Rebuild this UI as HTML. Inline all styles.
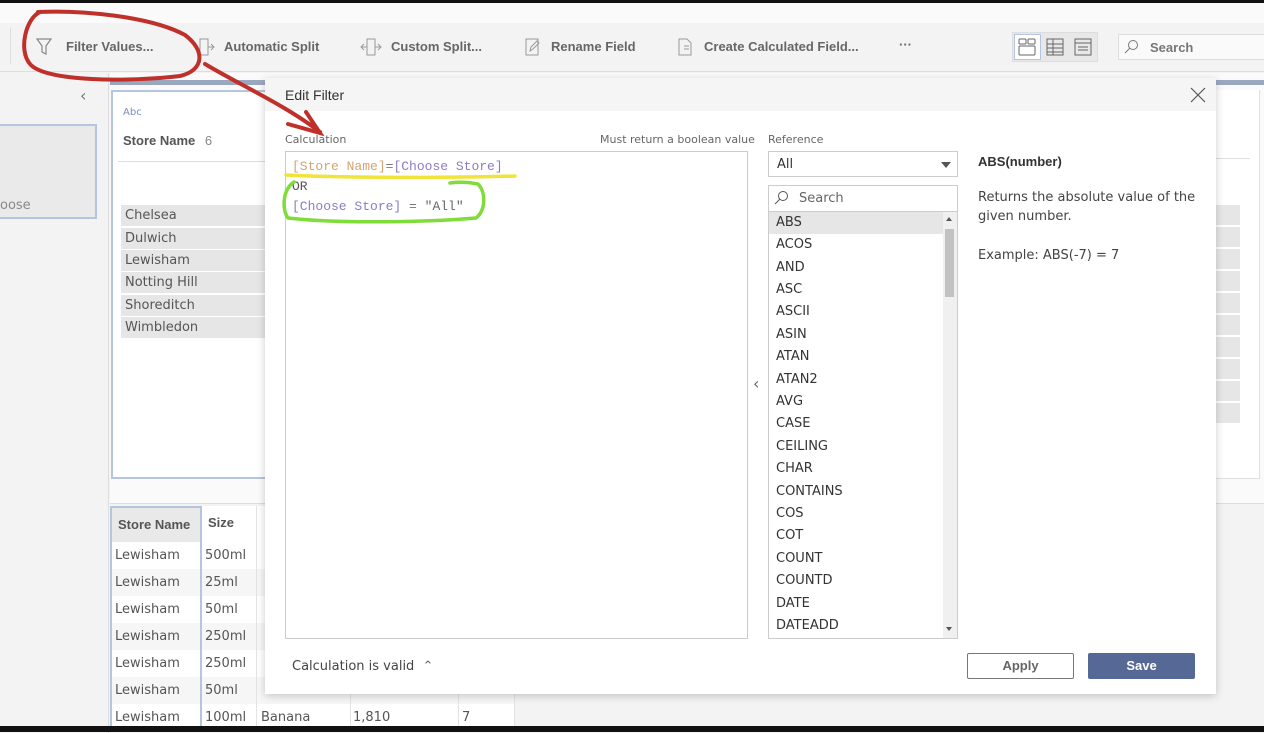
<!DOCTYPE html>
<html><head><meta charset="utf-8"><style>
*{box-sizing:border-box;margin:0;padding:0}
body{width:1264px;height:732px;position:relative;overflow:hidden;background:#f3f3f3;font-family:"DejaVu Sans","Liberation Sans",sans-serif;color:#333}
.a{position:absolute}
.t{font-size:13px;color:#555}
.tb{font-size:13px;color:#666;font-weight:bold;font-family:"Liberation Sans",sans-serif}
.mono{font-family:"Liberation Mono",monospace;font-size:13px}
.li{position:absolute;left:776px;font-size:13px;color:#333}
.row{position:absolute;left:121px;width:144px;height:21px;background:#e6e6e6;font-size:13px;color:#555;padding:3px 4px}
.rb{position:absolute;left:1215px;width:25px;height:20px;background:#e6e6e6}
.tr{position:absolute;left:110px;width:405px;height:27px;font-size:13px;color:#555}
.tr span{position:absolute;top:6px}
</style></head><body>
<div class="a" style="left:0;top:0;width:1264px;height:3px;background:#111"></div>
<div class="a" style="left:0;top:3px;width:1264px;height:20px;background:#fafafa"></div>
<div class="a" style="left:0;top:23px;width:1264px;height:49px;background:#f3f3f3;border-bottom:1px solid #ddd"></div>
<div class="a" style="left:10px;top:28px;width:1px;height:36px;background:#ddd"></div>
<svg class="a" style="left:36px;top:38px" width="16" height="18"><path d="M1 1h14l-5 7v8l-4-2V8z" fill="none" stroke="#888" stroke-width="1.2"/></svg>
<div class="a tb" style="left:66px;top:39px">Filter Values...</div>
<svg class="a" style="left:196px;top:37px" width="20" height="20"><rect x="4" y="2" width="8" height="16" fill="none" stroke="#999"/><path d="M12 10h6M15 7l3 3-3 3" fill="none" stroke="#999"/></svg>
<div class="a tb" style="left:224px;top:39px">Automatic Split</div>
<svg class="a" style="left:360px;top:37px" width="22" height="20"><rect x="7" y="2" width="8" height="16" fill="none" stroke="#999"/><path d="M1 10h6M4 7l-3 3 3 3M15 10h6M18 7l3 3-3 3" fill="none" stroke="#999"/></svg>
<div class="a tb" style="left:391px;top:39px">Custom Split...</div>
<svg class="a" style="left:524px;top:37px" width="18" height="20"><path d="M2 2h12v16H2z M6 14l1-4 6-6 2 2-6 6z" fill="none" stroke="#999"/></svg>
<div class="a tb" style="left:551px;top:39px">Rename Field</div>
<svg class="a" style="left:677px;top:37px" width="16" height="20"><path d="M2 2h8l4 4v12H2z M7 9h5M7 12h5" fill="none" stroke="#999"/></svg>
<div class="a tb" style="left:704px;top:39px">Create Calculated Field...</div>
<div class="a tb" style="left:899px;top:37px">···</div>
<div class="a" style="left:1012px;top:32px;width:86px;height:30px;background:#e8e8e8;border:1px solid #ddd"></div>
<div class="a" style="left:1014px;top:34px;width:27px;height:26px;background:#fff;border:1px solid #b5c5e0"></div>
<svg class="a" style="left:1017px;top:37px" width="80" height="20"><rect x="2" y="2" width="7" height="5" rx="1" fill="none" stroke="#666"/><rect x="11" y="2" width="7" height="5" rx="1" fill="none" stroke="#666"/><rect x="2" y="9" width="16" height="9" rx="1" fill="none" stroke="#666"/><rect x="30" y="2" width="16" height="16" fill="none" stroke="#666"/><path d="M30 7h16M30 11h16M30 15h16M36 2v16" stroke="#666"/><rect x="58" y="2" width="16" height="16" fill="none" stroke="#666"/><path d="M58 6h16M61 10h10M61 13h10" stroke="#666"/></svg>
<div class="a" style="left:1118px;top:34px;width:150px;height:26px;background:#fafafa;border:1px solid #ddd"></div>
<svg class="a" style="left:1124px;top:39px" width="16" height="16"><circle cx="9" cy="6" r="4.5" fill="none" stroke="#777"/><path d="M6 9l-5 5" stroke="#777"/></svg>
<div class="a tb" style="left:1150px;top:40px;color:#777">Search</div>
<div class="a" style="left:108px;top:73px;width:1px;height:660px;background:#ddd"></div>
<div class="a" style="left:80px;top:86px;font-size:16px;color:#777">‹</div>
<div class="a" style="left:-2px;top:124px;width:99px;height:95px;background:#eaeaea;border:2px solid #b5c5e0"></div>
<div class="a t" style="left:0;top:198px;color:#888">oose</div>
<div class="a" style="left:110px;top:73px;width:1154px;height:430px;background:#fafafa"></div>
<div class="a" style="left:110px;top:80px;width:1154px;height:5px;background:#9aa8bf"></div>
<div class="a" style="left:111px;top:90px;width:160px;height:389px;background:#fff;border:2px solid #b5c5e0;border-right:none"></div>
<div class="a" style="left:1215px;top:90px;width:45px;height:389px;background:#fff;border-right:1px solid #e0e0e0;border-bottom:1px solid #e0e0e0"></div>
<div class="a" style="left:1215px;top:158px;width:35px;height:1px;background:#e0e0e0"></div>
<div class="a" style="left:123px;top:107px;font-size:10px;color:#7a8fbf">Abc</div>
<div class="a" style="left:123px;top:133px;font-size:13px;font-weight:bold;color:#555;font-family:'Liberation Sans',sans-serif">Store Name <span style="font-weight:normal;color:#888;margin-left:6px">6</span></div>
<div class="a" style="left:118px;top:161px;width:150px;height:1px;background:#ddd"></div>
<div class="row" style="top:205px">Chelsea</div>
<div class="row" style="top:228px">Dulwich</div>
<div class="row" style="top:250px">Lewisham</div>
<div class="row" style="top:272px">Notting Hill</div>
<div class="row" style="top:295px">Shoreditch</div>
<div class="row" style="top:317px">Wimbledon</div>
<div class="rb" style="top:205px"></div><div class="rb" style="top:227px"></div><div class="rb" style="top:249px"></div><div class="rb" style="top:271px"></div><div class="rb" style="top:293px"></div><div class="rb" style="top:315px"></div><div class="rb" style="top:337px"></div><div class="rb" style="top:359px"></div><div class="rb" style="top:381px"></div><div class="rb" style="top:403px"></div>
<div class="a" style="left:110px;top:503px;width:1154px;height:1px;background:#ddd"></div>
<div class="a" style="left:110px;top:506px;width:405px;height:222px;background:#fff"></div>
<div class="tr" style="top:542px"><span style="left:5px">Lewisham</span><span style="left:95px">500ml</span></div>
<div class="tr" style="top:569px;background:#f6f6f6"><span style="left:5px">Lewisham</span><span style="left:95px">25ml</span></div>
<div class="tr" style="top:596px"><span style="left:5px">Lewisham</span><span style="left:95px">50ml</span></div>
<div class="tr" style="top:623px;background:#f6f6f6"><span style="left:5px">Lewisham</span><span style="left:95px">250ml</span></div>
<div class="tr" style="top:650px"><span style="left:5px">Lewisham</span><span style="left:95px">250ml</span></div>
<div class="tr" style="top:677px;background:#f6f6f6"><span style="left:5px">Lewisham</span><span style="left:95px">50ml</span></div>
<div class="tr" style="top:704px"><span style="left:5px">Lewisham</span><span style="left:95px">100ml</span><span style="left:151px">Banana</span><span style="left:243px">1,810</span><span style="left:352px">7</span></div>
<div class="a" style="left:110px;top:506px;width:92px;height:36px;background:#e9e9e9"></div>
<div class="a" style="left:118px;top:517px;font-size:13px;font-weight:bold;color:#555;font-family:'Liberation Sans',sans-serif">Store Name</div>
<div class="a" style="left:208px;top:515px;font-size:13px;font-weight:bold;color:#555;font-family:'Liberation Sans',sans-serif">Size</div>
<div class="a" style="left:110px;top:506px;width:92px;height:226px;border:2px solid #b5c5e0;border-bottom:none"></div>
<div class="a" style="left:256px;top:506px;width:1px;height:222px;background:#e3e3e3"></div>
<div class="a" style="left:350px;top:506px;width:1px;height:222px;background:#e3e3e3"></div>
<div class="a" style="left:458px;top:506px;width:1px;height:222px;background:#e3e3e3"></div>
<div class="a" style="left:514px;top:506px;width:1px;height:222px;background:#e3e3e3"></div>
<div class="a" style="left:0;top:726px;width:1264px;height:6px;background:#111"></div>
<div class="a" style="left:265px;top:78px;width:951px;height:616px;background:#fff;box-shadow:0 2px 8px rgba(0,0,0,.2)"></div>
<div class="a" style="left:265px;top:78px;width:951px;height:33px;background:#f5f5f5"></div>
<div class="a" style="left:285px;top:87px;font-size:14px;color:#333;font-family:'Liberation Sans',sans-serif">Edit Filter</div>
<svg class="a" style="left:1190px;top:87px" width="16" height="16"><path d="M1 1l14 14M15 1L1 15" stroke="#555" stroke-width="1.2"/></svg>
<div class="a" style="left:285px;top:133px;font-size:11px;color:#666">Calculation</div>
<div class="a" style="left:600px;top:133px;font-size:11px;color:#666">Must return a boolean value</div>
<div class="a" style="left:285px;top:151px;width:463px;height:488px;border:1px solid #ccc"></div>
<div class="a mono" style="left:292px;top:159px;color:#d4a373">[Store Name]<span style="color:#777">=</span><span style="color:#8e7cc3">[Choose Store]</span></div>
<div class="a mono" style="left:292px;top:179px;color:#555">OR</div>
<div class="a mono" style="left:292px;top:199px;color:#8e7cc3">[Choose Store] <span style="color:#777">=</span> <span style="color:#666">"All"</span></div>
<div class="a" style="left:768px;top:133px;font-size:11px;color:#666">Reference</div>
<div class="a" style="left:768px;top:151px;width:190px;height:26px;border:1px solid #ccc;font-size:13px;padding:5px 8px">All</div>
<div class="a" style="left:941px;top:162px;width:0;height:0;border-left:5px solid transparent;border-right:5px solid transparent;border-top:6px solid #555"></div>
<div class="a" style="left:768px;top:185px;width:190px;height:454px;border:1px solid #ccc"></div>
<div class="a" style="left:768px;top:211px;width:190px;height:1px;background:#ccc"></div>
<svg class="a" style="left:774px;top:190px" width="16" height="16"><circle cx="9" cy="6" r="4.5" fill="none" stroke="#555"/><path d="M6 9l-5 5" stroke="#555"/></svg>
<div class="a" style="left:799px;top:191px;font-size:13px;color:#666">Search</div>
<div class="a" style="left:769px;top:212px;width:174px;height:22px;background:#e6e6e6"></div>
<div class="a" style="left:943px;top:212px;width:14px;height:426px;background:#f0f0f0"></div>
<div class="a" style="left:945px;top:229px;width:9px;height:68px;background:#c2c2c2"></div>
<div class="a" style="left:946px;top:217px;border-left:3px solid transparent;border-right:3px solid transparent;border-bottom:4px solid #555"></div>
<div class="a" style="left:946px;top:627px;border-left:3px solid transparent;border-right:3px solid transparent;border-top:4px solid #555"></div>
<div class="li" style="top:215px">ABS</div><div class="li" style="top:237px">ACOS</div><div class="li" style="top:260px">AND</div><div class="li" style="top:282px">ASC</div><div class="li" style="top:304px">ASCII</div><div class="li" style="top:327px">ASIN</div><div class="li" style="top:349px">ATAN</div><div class="li" style="top:372px">ATAN2</div><div class="li" style="top:394px">AVG</div><div class="li" style="top:416px">CASE</div><div class="li" style="top:439px">CEILING</div><div class="li" style="top:461px">CHAR</div><div class="li" style="top:484px">CONTAINS</div><div class="li" style="top:506px">COS</div><div class="li" style="top:528px">COT</div><div class="li" style="top:551px">COUNT</div><div class="li" style="top:573px">COUNTD</div><div class="li" style="top:596px">DATE</div><div class="li" style="top:618px">DATEADD</div>
<div class="a" style="left:753px;top:374px;font-size:16px;color:#666">‹</div>
<div class="a" style="left:978px;top:154px;font-size:13px;font-weight:bold;color:#333;font-family:'Liberation Sans',sans-serif">ABS(number)</div>
<div class="a" style="left:978px;top:188px;font-size:13px;color:#444;line-height:19px;width:220px">Returns the absolute value of the given number.</div>
<div class="a" style="left:978px;top:248px;font-size:13px;color:#444">Example: ABS(-7) = 7</div>
<div class="a" style="left:292px;top:659px;font-size:13px;color:#444">Calculation is valid <span style="margin-left:4px;color:#666">⌃</span></div>
<div class="a" style="left:967px;top:653px;width:107px;height:26px;border:1px solid #777;border-radius:2px;text-align:center;font-size:13px;font-weight:bold;color:#666;line-height:24px;font-family:'Liberation Sans',sans-serif">Apply</div>
<div class="a" style="left:1088px;top:653px;width:107px;height:26px;background:#566896;border-radius:2px;text-align:center;font-size:13px;font-weight:bold;color:#fff;line-height:26px;font-family:'Liberation Sans',sans-serif">Save</div>
<svg class="a" style="left:0;top:0" width="1264" height="732">
<path d="M40 12 C26 18 18 50 30 64 C45 82 130 82 180 76 C205 70 205 50 185 35 C150 16 80 10 38 12" fill="none" stroke="#c0302a" stroke-width="4" stroke-linecap="round"/>
<path d="M205 64 C240 85 285 105 320 132" fill="none" stroke="#c0302a" stroke-width="4" stroke-linecap="round"/>
<path d="M288 124 L320 133 L306 112" fill="none" stroke="#c0302a" stroke-width="4" stroke-linecap="round"/>
<path d="M286 175 C350 178 450 178 515 176" fill="none" stroke="#f1e33a" stroke-width="3.5" stroke-linecap="round"/>
<path d="M294 182 C282 190 282 210 288 218 C340 224 430 222 476 218 C486 210 486 192 478 184 C468 182 458 182 450 183" fill="none" stroke="#7fdc3a" stroke-width="3.5" stroke-linecap="round"/>
</svg>
</body></html>
